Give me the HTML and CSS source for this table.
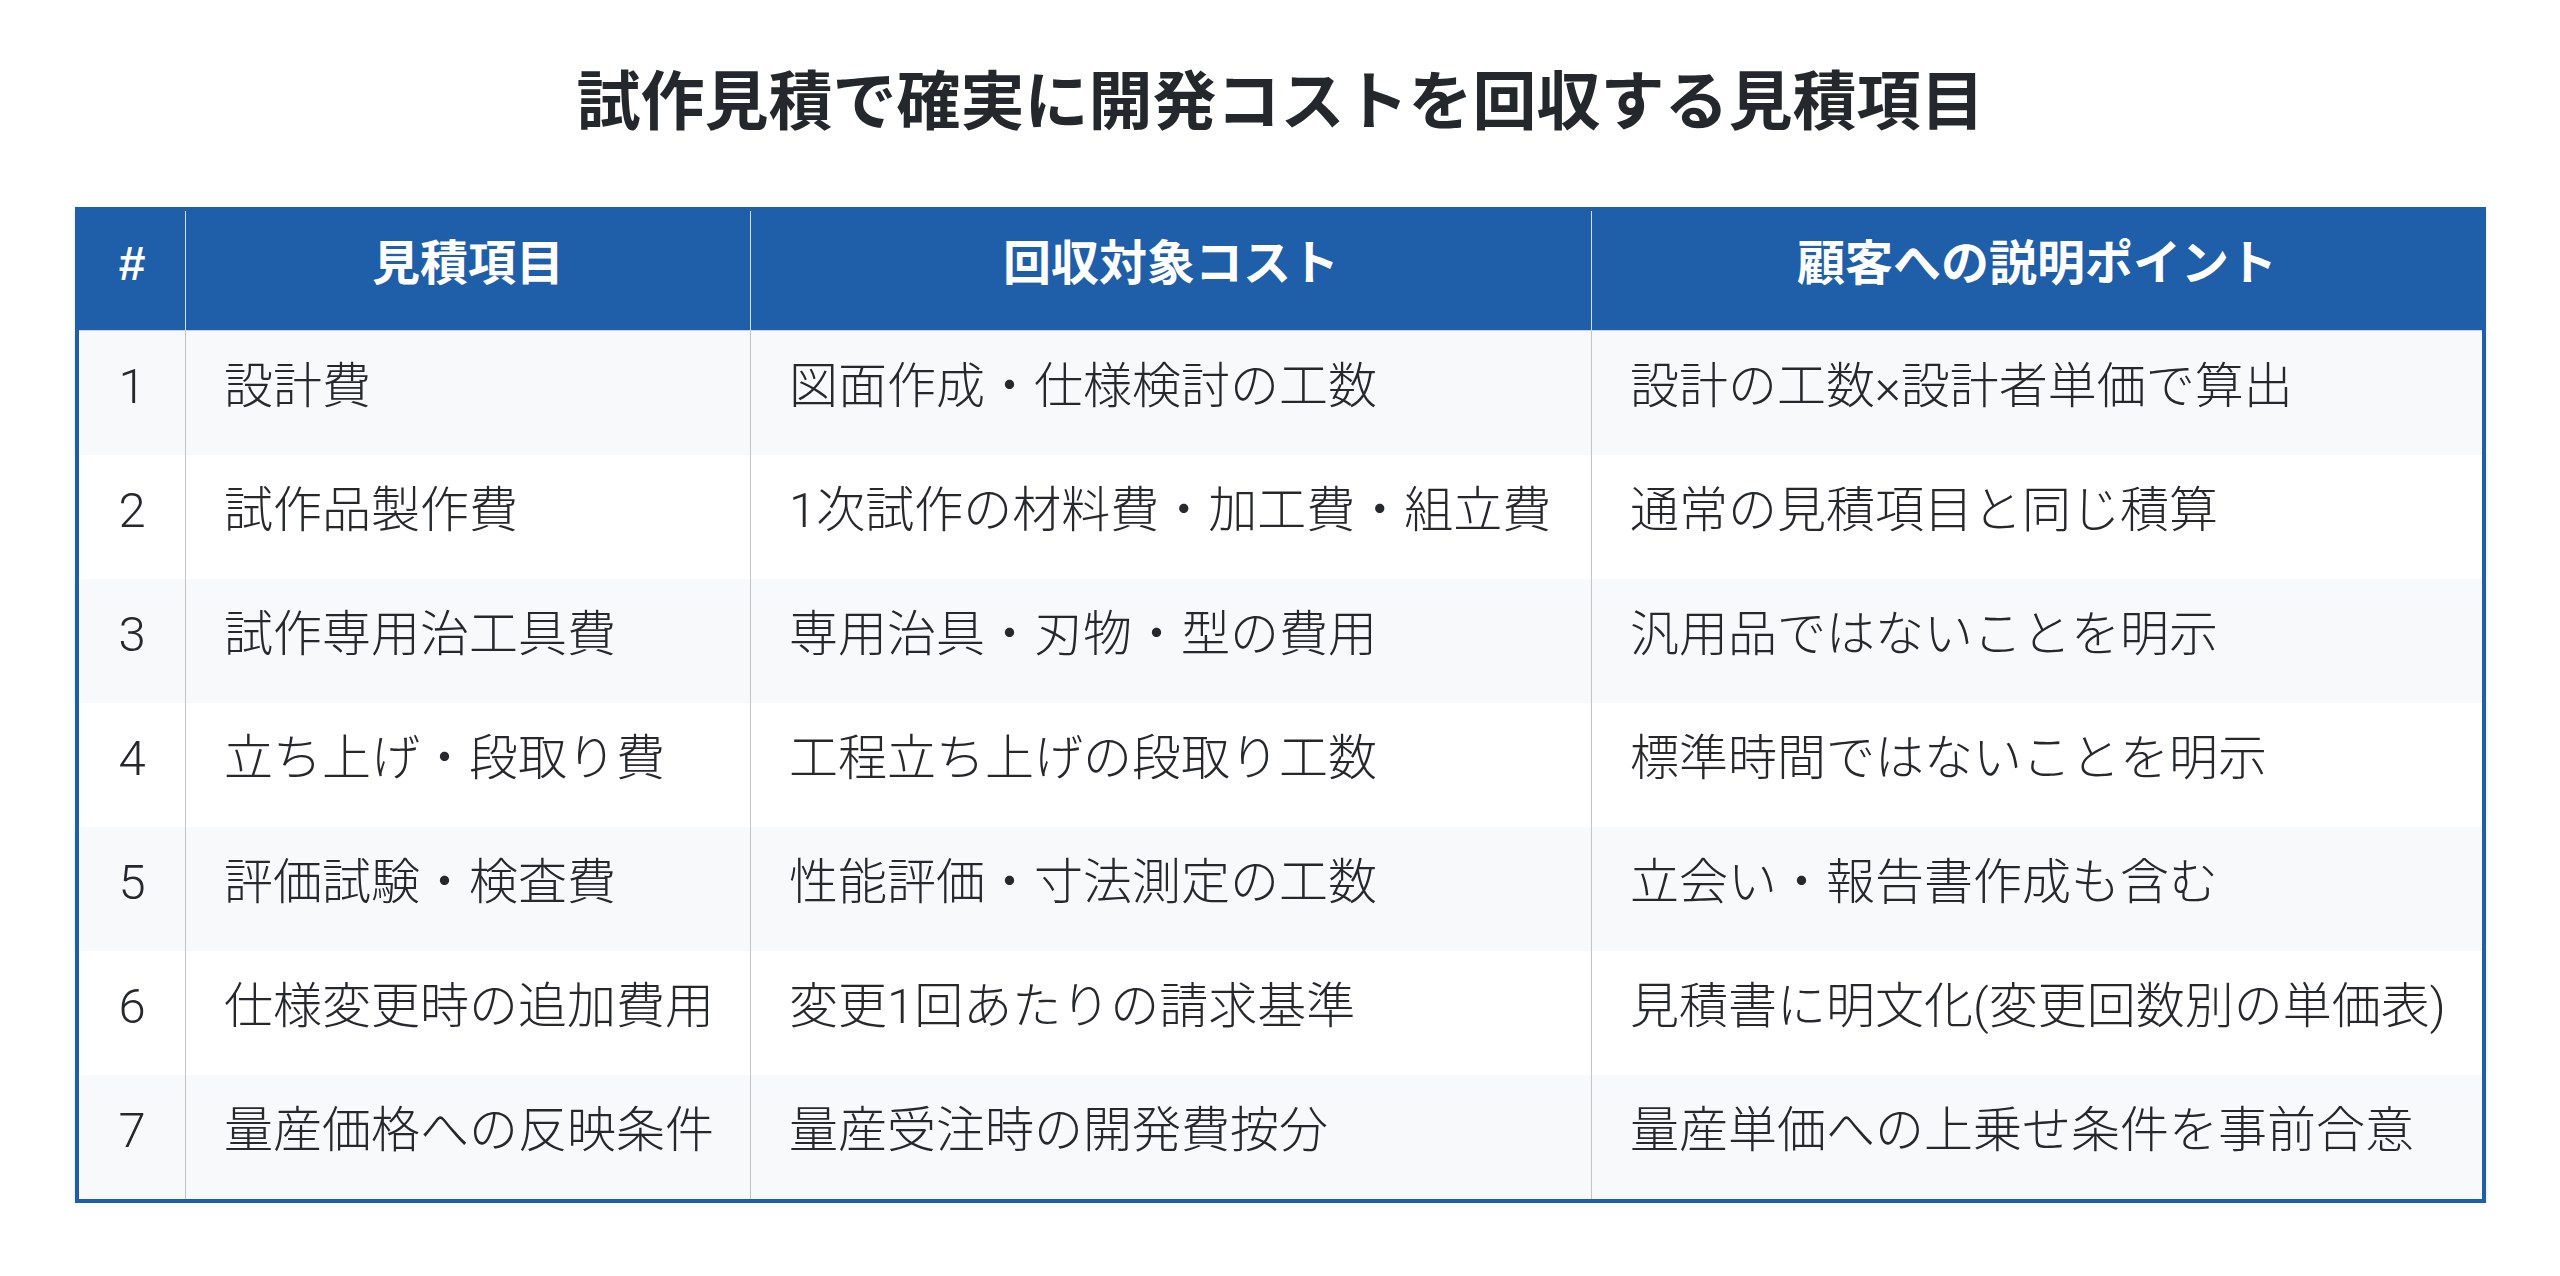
FILE: index.html
```html
<!DOCTYPE html>
<html lang="ja">
<head>
<meta charset="utf-8">
<title>試作見積で確実に開発コストを回収する見積項目</title>
<link rel="stylesheet" href="styles.css">
</head>
<body>
<main class="page">
  <h1 class="title">試作見積で確実に開発コストを回収する見積項目</h1>
  <div class="table-wrap">
    <table class="est">
      <colgroup>
        <col class="c-num">
        <col class="c-item">
        <col class="c-cost">
        <col class="c-point">
      </colgroup>
      <thead>
        <tr>
          <th>#</th>
          <th>見積項目</th>
          <th>回収対象コスト</th>
          <th>顧客への説明ポイント</th>
        </tr>
      </thead>
      <tbody>
        <tr>
          <td class="num">1</td>
          <td>設計費</td>
          <td>図面作成・仕様検討の工数</td>
          <td>設計の工数×設計者単価で算出</td>
        </tr>
        <tr>
          <td class="num">2</td>
          <td>試作品製作費</td>
          <td>1次試作の材料費・加工費・組立費</td>
          <td>通常の見積項目と同じ積算</td>
        </tr>
        <tr>
          <td class="num">3</td>
          <td>試作専用治工具費</td>
          <td>専用治具・刃物・型の費用</td>
          <td>汎用品ではないことを明示</td>
        </tr>
        <tr>
          <td class="num">4</td>
          <td>立ち上げ・段取り費</td>
          <td>工程立ち上げの段取り工数</td>
          <td>標準時間ではないことを明示</td>
        </tr>
        <tr>
          <td class="num">5</td>
          <td>評価試験・検査費</td>
          <td>性能評価・寸法測定の工数</td>
          <td>立会い・報告書作成も含む</td>
        </tr>
        <tr>
          <td class="num">6</td>
          <td>仕様変更時の追加費用</td>
          <td>変更1回あたりの請求基準</td>
          <td>見積書に明文化(変更回数別の単価表)</td>
        </tr>
        <tr>
          <td class="num">7</td>
          <td>量産価格への反映条件</td>
          <td>量産受注時の開発費按分</td>
          <td>量産単価への上乗せ条件を事前合意</td>
        </tr>
      </tbody>
    </table>
  </div>
</main>
</body>
</html>
```

FILE: styles.css
```css
html, body {
  margin: 0;
  padding: 0;
  background: #ffffff;
}

body {
  font-family: "Noto Sans CJK JP", "Noto Sans", sans-serif;
  color: #2a2b2e;
}

.page {
  padding: 48px 74px 0 75px;
}

.title {
  margin: 0;
  font-size: 64px;
  line-height: 96px;
  font-weight: 700;
  text-align: center;
  color: #24272b;
}

.table-wrap {
  margin-top: 63px;
}

.est {
  width: 100%;
  table-layout: fixed;
  border-collapse: separate;
  border-spacing: 0;
  border: 4px solid #1f5ea8;
  box-shadow: 0 2px 3px rgba(0, 0, 0, 0.12);
  font-family: "Liberation Sans", "Noto Sans CJK JP", sans-serif;
  font-size: 49px;
}

.c-num { width: 107px; }
.c-item { width: 565px; }
.c-cost { width: 841px; }
.c-point { width: auto; }

.est th {
  height: 120px;
  box-sizing: border-box;
  padding: 0 20px 14px;
  background: #1f5ea8;
  color: #ffffff;
  font-weight: 700;
  font-size: 48px;
  text-align: center;
  vertical-align: middle;
  border-right: 1px solid rgba(255, 255, 255, 0.8);
  border-bottom: 1px solid #c6d3e4;
  line-height: 1.2;
}

.est th:last-child,
.est td:last-child {
  border-right: none;
}

.est td {
  height: 124px;
  padding: 0 20px 12px 38px;
  box-sizing: border-box;
  vertical-align: middle;
  white-space: nowrap;
  border-right: 1px solid #c2c4c8;
  font-family: "Roboto", "Noto Sans CJK JP", sans-serif;
  line-height: 1.2;
  font-weight: 300;
  color: #26282c;
}

.est td.num {
  padding: 0 0 12px 0;
  text-align: center;
}

.est tbody tr:nth-child(odd) td {
  background: #f8f9fb;
}

.est tbody tr:nth-child(even) td {
  background: #ffffff;
}
```
